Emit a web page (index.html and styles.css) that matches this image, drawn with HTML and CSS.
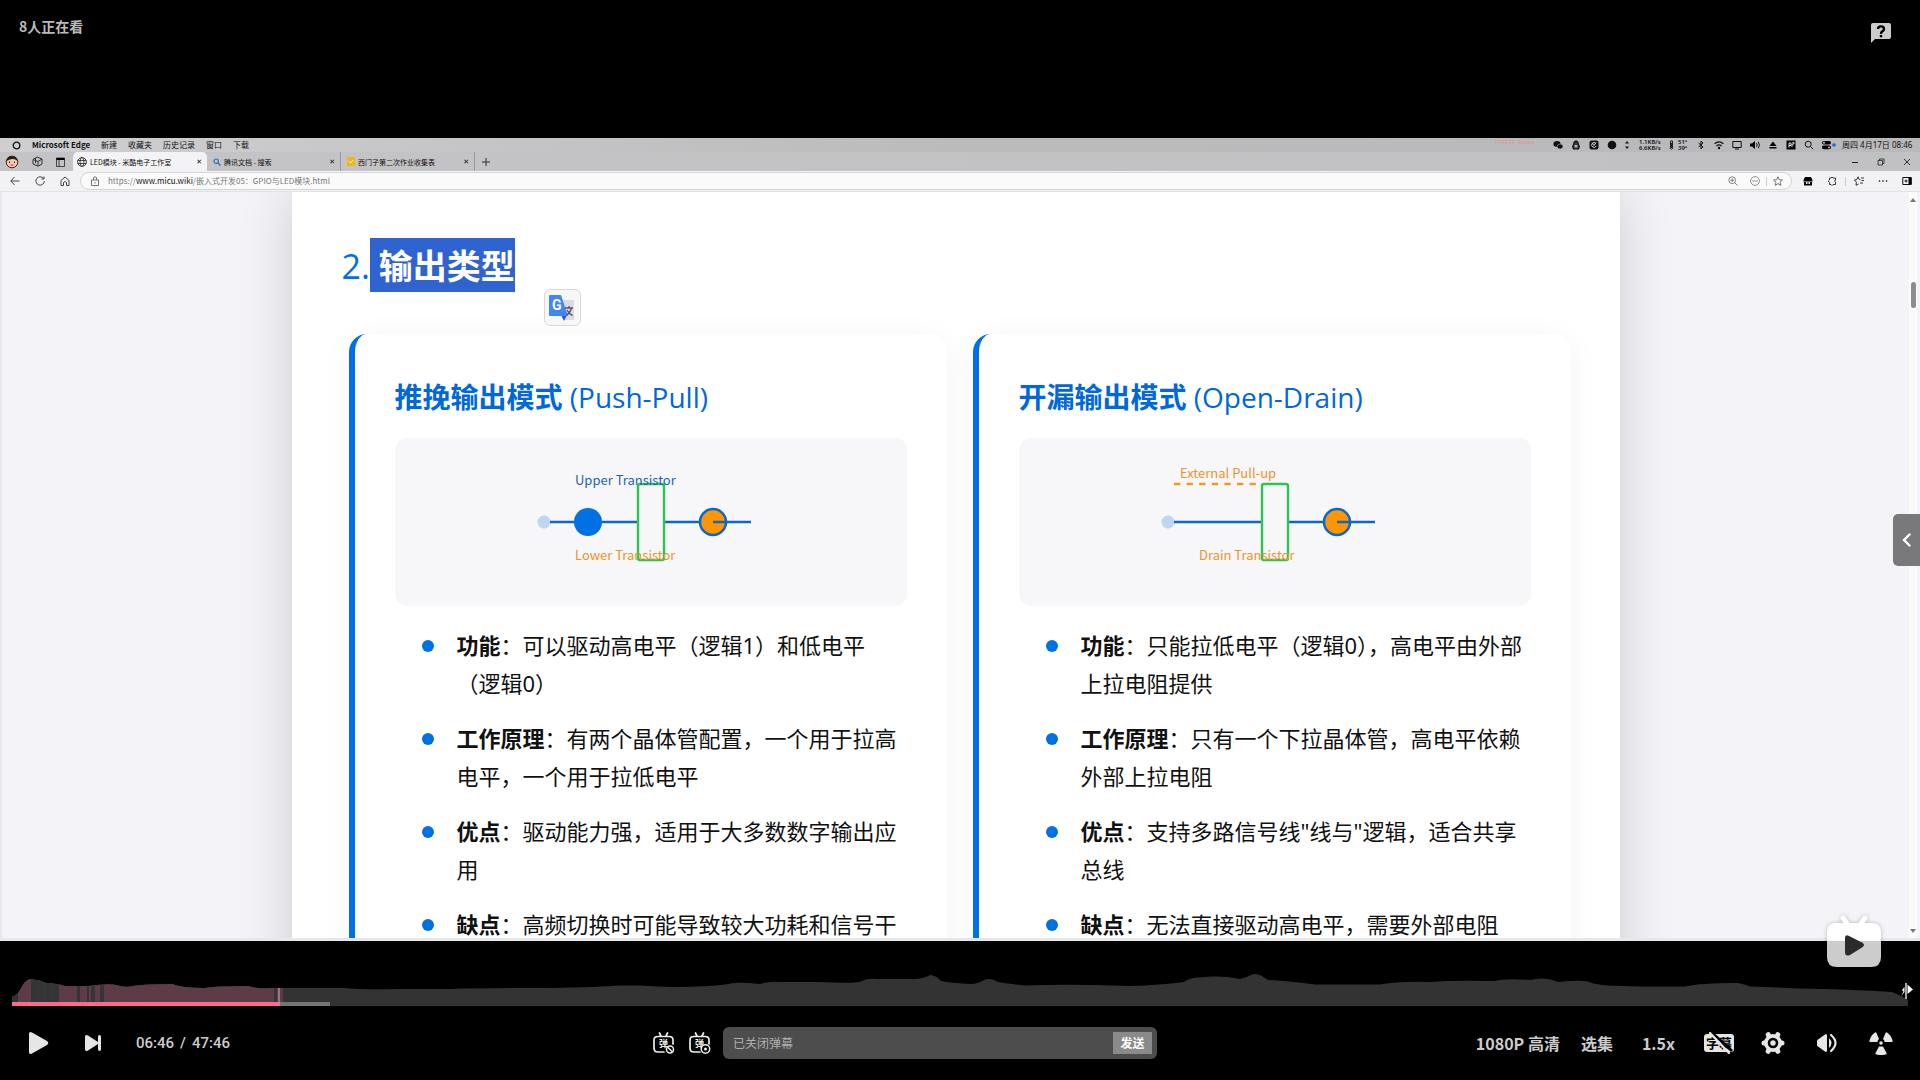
FILE: index.html
```html
<!DOCTYPE html>
<html lang="zh-CN">
<head>
<meta charset="utf-8">
<title>LED模块 - 米酷电子工作室</title>
<link rel="stylesheet" href="styles.css">
</head>
<body>
<main class="player">
  <header class="player-top">
    <span class="viewers">8人正在看</span>
    <button class="icon-btn" aria-label="帮助">
      <svg width="22" height="22" viewBox="0 0 22 22"><path fill="#ccc" d="M3 1H19Q21 1 21 3V15Q21 17 19 17H5L1 21V3Q1 1 3 1Z"/><path fill="none" stroke="#000" stroke-width="2.4" d="M8 7Q8 4.400 11 4.400Q14 4.400 14 7Q14 8.600 12.300 9.400Q11 10 11 12M11 13V15.200"/></svg>
    </button>
  </header>

  <section class="video">
    <div class="menubar">
      <svg class="ring" width="9" height="9" viewBox="0 0 9 9"><circle cx="4.500" cy="4.500" r="3.300" fill="none" stroke="#111" stroke-width="1.300"/></svg>
      <b class="app-name">Microsoft Edge</b>
      <nav class="menus"><span>新建</span><span>收藏夹</span><span>历史记录</span><span>窗口</span><span>下载</span></nav>
      <span class="rec-note">17:02:53 - Secure</span>
      <div class="tray">
        <svg viewBox="0 0 10 10"><ellipse cx="4" cy="4" rx="3.600" ry="3" fill="#111"/><ellipse cx="7" cy="6.500" rx="2.900" ry="2.400" fill="#111" stroke="#bbb" stroke-width=".5"/></svg>
        <svg viewBox="0 0 10 10"><path fill="#333" stroke="#111" d="M5 .8Q7.400.8 7.400 4L8.700 7 7.500 6.800 8 9H2L2.500 6.800 1.300 7 2.600 4Q2.600.8 5 .8Z"/><path fill="#bbb" d="M3.600 5H6.400V7.500H3.600Z"/></svg>
        <svg viewBox="0 0 10 10"><rect x=".5" y=".5" width="9" height="9" rx="2" fill="#111"/><path fill="none" stroke="#ccc" d="M7 3.500A2.400 2.400 0 1 0 7.300 6M3 2.500 5 5.500 7 2.500"/></svg>
        <svg viewBox="0 0 10 10"><circle cx="5" cy="5" r="4.300" fill="#111"/></svg>
        <svg class="narrow" viewBox="0 0 4 10"><path fill="#111" d="M0 3.500 2 1 4 3.500ZM0 6.500H4L2 9Z"/></svg>
        <span class="net">1.1KB/s<br>6.6KB/s</span>
        <svg class="thermo" viewBox="0 0 5 10"><path fill="none" stroke="#222" d="M1.500 1H3.500V6Q4.500 9.300 2.500 9.300T1.500 6ZM2.500 3V8"/></svg>
        <span class="temp">51°<br>39°</span>
        <svg viewBox="0 0 10 10"><path fill="none" stroke="#111" d="M2.500 3 7 7 5 9V1L7 3 2.500 7"/></svg>
        <svg viewBox="0 0 10 10"><path fill="none" stroke="#111" stroke-width="1.300" d="M.6 3.800Q5 0 9.400 3.800M2.400 6Q5 3.800 7.600 6"/><circle cx="5" cy="8" r="1.200"/></svg>
        <svg viewBox="0 0 10 10"><path fill="none" stroke="#111" d="M.8 1.500H9.200V7.500H.8ZM3 9H7"/></svg>
        <svg viewBox="0 0 10 10"><path d="M0 3.500H2L5 1V9L2 6.500H0Z"/><path fill="none" stroke="#111" d="M6.500 3.200Q7.800 5 6.500 6.800M8.300 1.800Q10.500 5 8.300 8.200"/></svg>
        <svg viewBox="0 0 10 10"><path d="M1.500 6 5 1.500 8.500 6ZM1.500 7H8.500V8.500H1.500Z"/></svg>
        <svg viewBox="0 0 10 10"><rect x=".5" y=".5" width="9" height="9"/><path fill="none" stroke="#ddd" d="M3 7.500V3H5V5.500H3M6 7V4H8V2.500H6.500"/></svg>
        <svg viewBox="0 0 10 10"><circle cx="4.200" cy="4.200" r="3" fill="none" stroke="#111"/><path stroke="#111" d="M6.500 6.500 9.300 9.300"/></svg>
        <svg class="toggles" viewBox="0 0 14 10"><rect x="0" y="1" width="9" height="3.600" rx="1.800"/><rect x="0" y="5.600" width="9" height="3.600" rx="1.800"/><circle cx="2" cy="2.800" r="1" fill="#bbb"/><circle cx="7" cy="7.400" r="1" fill="#bbb"/><circle cx="12" cy="5" r="1.800" fill="#1565e8"/></svg>
      </div>
      <time class="clock">周四 4月17日 08:46</time>
    </div>

    <div class="tabstrip">
      <div class="strip-tools">
        <svg width="14" height="14" viewBox="0 0 14 14"><circle cx="7" cy="7" r="5.800" fill="#f4c8a8" stroke="#3a2a22"/><path fill="#222" d="M1.500 6Q2 1 7 1T12.500 6Q10 3.500 7 4T1.500 6Z"/><path stroke="#222" d="M4.500 6.500V8M9.500 6.500V8"/><path stroke="#c33" d="M5.500 10H8.500"/></svg>
        <svg width="11" height="11" viewBox="0 0 11 11"><path fill="none" stroke="#333" d="M1 3.500 5 1 10 3V8L6 10.200 1 8ZM1 3.500 6 5.500V10M6 5.500 10 3M3.500 2V7"/></svg>
        <svg width="9" height="10" viewBox="0 0 9 10"><path fill="none" stroke="#222" stroke-width=".8" d="M.5 1H8.500V9.500H.5ZM3 3V9.500"/><path d="M.5 1H8.500V3H.5Z"/></svg>
      </div>
      <div class="tab active">
        <svg width="10" height="10" viewBox="0 0 10 10"><g fill="none" stroke="#222" stroke-width=".8"><circle cx="5" cy="5" r="4.400"/><ellipse cx="5" cy="5" rx="2" ry="4.400"/><path d="M.6 3.500H9.400M.6 6.500H9.400"/></g></svg>
        <span>LED模块 - 米酷电子工作室</span><button aria-label="关闭">✕</button>
      </div>
      <div class="tab">
        <svg width="8" height="8" viewBox="0 0 8 8"><circle cx="3.200" cy="3.200" r="2.200" fill="none" stroke="#2a74b8" stroke-width="1.200"/><path stroke="#2a74b8" stroke-width="1.400" d="M5 5 7.500 7.500"/></svg>
        <span>腾讯文档 - 搜索</span><button aria-label="关闭">✕</button>
      </div>
      <div class="tab">
        <svg width="8" height="9" viewBox="0 0 8 9"><rect width="8" height="9" rx="1" fill="#f7b512"/><path fill="none" stroke="#fff" d="M2 4.500 3.500 6 6 3"/></svg>
        <span>西门子第二次作业收集表</span><button aria-label="关闭">✕</button>
      </div>
      <button class="new-tab" aria-label="新标签页"><svg width="8" height="8" viewBox="0 0 8 8"><path stroke="#333" d="M4 0V8M0 4H8"/></svg></button>
      <div class="win">
        <svg viewBox="0 0 8 8"><path stroke="#222" d="M1 4.500H7"/></svg>
        <svg viewBox="0 0 8 8"><path fill="none" stroke="#222" stroke-width=".8" d="M1 2.500H5.500V7H1ZM2.500 2.500V1H7V5.500H5.500"/></svg>
        <svg viewBox="0 0 8 8"><path stroke="#222" stroke-width=".9" d="M1 1 7 7M7 1 1 7"/></svg>
      </div>
    </div>

    <div class="toolbar">
      <div class="nav-tools">
        <svg viewBox="0 0 10 10"><path fill="none" stroke="#333" stroke-width=".9" d="M9.500 5H.8M4.500 1 .8 5 4.500 9"/></svg>
        <svg viewBox="0 0 10 10"><path fill="none" stroke="#333" stroke-width=".9" d="M8.500 2.500A4.200 4.200 0 1 0 9.300 5M9 .5V3H6.500"/></svg>
        <svg viewBox="0 0 10 10"><path fill="none" stroke="#333" stroke-width=".9" d="M1 4.500 5 1 9 4.500V9.500H6.500V6.500Q5 4.500 3.500 6.500V9.500H1Z"/></svg>
      </div>
      <div class="address">
        <svg viewBox="0 0 10 10"><path fill="none" stroke="#555" stroke-width=".8" d="M1.500 4H8.500V9.500H1.500ZM3.500 4V1.500Q5 0 6.500 1.500V4M5 6V7.500"/></svg>
        <span class="url">https://<em>www.micu.wiki</em>/嵌入式开发05：GPIO与LED模块.html</span>
        <div class="addr-tools">
          <svg viewBox="0 0 10 10"><g fill="none" stroke="#666" stroke-width=".8"><circle cx="4.200" cy="4.200" r="3.400"/><path d="M6.700 6.700 9.500 9.500M2.500 4.200H6M4.200 2.500V6"/></g></svg>
          <svg viewBox="0 0 10 10"><circle cx="5" cy="5" r="4.400" fill="none" stroke="#666" stroke-width=".7"/><path stroke="#444" stroke-dasharray="1 1" d="M2.500 5H8"/></svg>
          <i class="rule"></i>
          <svg viewBox="0 0 10 10"><path fill="none" stroke="#555" stroke-width=".8" d="M5 .8 6.300 3.700 9.500 4 7 6.200 7.800 9.300 5 7.600 2.200 9.300 3 6.200.5 4 3.700 3.700Z"/></svg>
        </div>
      </div>
      <div class="ext-tools">
        <svg viewBox="0 0 10 10"><path d="M2 1H8L9.500 4V5.500H.5V4ZM1 6H9V9.500H1Z"/><path fill="#eee" d="M3 6H4.500V8H3ZM5.500 6H7V8H5.500Z"/></svg>
        <svg viewBox="0 0 10 10"><path fill="none" stroke="#222" stroke-width=".9" d="M2.500 2H4Q5 0 6 2H8.500V4Q6.500 5 8.500 6.200V8.500H6Q5 10.500 4 8.500H2.500V6.500Q0 5 2.500 4Z"/></svg>
        <i class="rule"></i>
        <svg viewBox="0 0 10 10"><path fill="none" stroke="#222" stroke-width=".9" d="M6.500 3.700 5.300 3.500 4 .8 2.900 3.500.4 4 2.400 6.200 2 9.300 4.500 8M7 2H10M7.500 4.500H10M6 7H9"/></svg>
        <svg viewBox="0 0 10 10"><circle cx="1.500" cy="5" r=".8"/><circle cx="5" cy="5" r=".8"/><circle cx="8.500" cy="5" r=".8"/></svg>
        <svg viewBox="0 0 10 10"><path fill="none" stroke="#111" d="M.8 1.500H9.200V8.500H.8ZM2.500 5H5.500M4 3.500V6.500"/><path d="M6.500 1.500H9.500V8.500H6.500Z"/></svg>
      </div>
    </div>

    <div class="viewport">
      <article class="sheet">
        <h1 class="title"><span>2.</span><mark>&nbsp;输出类型</mark>
          <button class="translate" aria-label="翻译">
            <svg width="30" height="30" viewBox="0 0 30 30"><path fill="#dcdcde" d="M11 7H26V27H17Z"/><path fill="#3a52b8" d="M13 22H19L16 28Z"/><path fill="#4285f4" d="M2 2H13L20 23H2Q1 23 1 22V3Q1 2 2 2Z"/><text x="4" y="17" class="glyph-g">G</text><path fill="none" stroke="#556" stroke-width="1.400" d="M17 15H25M21 13V15M23.500 15Q22 20 18.500 22M19 17Q21 21 24.500 22.500"/></svg>
          </button>
        </h1>
        <div class="cards">
          <section class="card">
            <h2>推挽输出模式 <span>(Push-Pull)</span></h2>
            <div class="diagram">
              <svg viewBox="0 0 512 168">
                <circle cx="149" cy="84" r="6.500" fill="#bdd7f3"/>
                <g fill="none" stroke="#0b67c9" stroke-width="2.500"><path d="M155 84H243M269 84H318"/></g>
                <circle cx="193" cy="84" r="14" fill="#0071e3"/>
                <rect x="243" y="46" width="26" height="76" rx="2" fill="none" stroke="#2dc44f" stroke-width="2.400"/>
                <circle cx="318" cy="84" r="13" fill="#ff9500" stroke="#0b67c9" stroke-width="2.500"/>
                <path stroke="#0b67c9" stroke-width="2.500" d="M318 84H356"/>
                <text x="180" y="47" class="lbl blue">Upper Transistor</text>
                <text x="180" y="122" class="lbl">Lower Transistor</text>
              </svg>
            </div>
            <ul>
              <li><p><b>功能</b>：可以驱动高电平（逻辑1）和低电平<br>（逻辑0）</p></li>
              <li><p><b>工作原理</b>：有两个晶体管配置，一个用于拉高电平，一个用于拉低电平</p></li>
              <li><p><b>优点</b>：驱动能力强，适用于大多数数字输出应用</p></li>
              <li><p><b>缺点</b>：高频切换时可能导致较大功耗和信号干扰</p></li>
            </ul>
          </section>
          <section class="card">
            <h2>开漏输出模式 <span>(Open-Drain)</span></h2>
            <div class="diagram">
              <svg viewBox="0 0 512 168">
                <circle cx="149" cy="84" r="6.500" fill="#bdd7f3"/>
                <path stroke="#ee9a1c" stroke-width="2.500" stroke-dasharray="6.300 6.300" d="M155 46H240"/>
                <path stroke="#0b67c9" stroke-width="2.500" d="M155 84H243M269 84H318"/>
                <rect x="243" y="46" width="26" height="76" rx="2" fill="none" stroke="#2dc44f" stroke-width="2.400"/>
                <circle cx="318" cy="84" r="13" fill="#ff9500" stroke="#0b67c9" stroke-width="2.500"/>
                <path stroke="#0b67c9" stroke-width="2.500" d="M318 84H356"/>
                <text x="161" y="40" class="lbl">External Pull-up</text>
                <text x="180" y="122" class="lbl">Drain Transistor</text>
              </svg>
            </div>
            <ul>
              <li><p><b>功能</b>：只能拉低电平（逻辑0），高电平由外部上拉电阻提供</p></li>
              <li><p><b>工作原理</b>：只有一个下拉晶体管，高电平依赖外部上拉电阻</p></li>
              <li><p><b>优点</b>：支持多路信号线"线与"逻辑，适合共享总线</p></li>
              <li><p><b>缺点</b>：无法直接驱动高电平，需要外部电阻</p></li>
            </ul>
          </section>
        </div>
      </article>
      <div class="scrollbar">
        <svg width="6" height="4" viewBox="0 0 6 4"><path fill="#777" d="M0 4 3 0 6 4Z"/></svg>
        <i class="thumb"></i>
        <svg width="6" height="4" viewBox="0 0 6 4"><path fill="#777" d="M0 0H6L3 4Z"/></svg>
      </div>
    </div>
  </section>

  <button class="side-toggle" aria-label="展开侧栏"><svg width="10" height="14" viewBox="0 0 10 14"><path fill="none" stroke="#fff" stroke-width="2.400" stroke-linecap="round" d="M7.500 1.500 2 7 7.500 12.500"/></svg></button>

  <svg class="tv" width="56" height="54" viewBox="0 0 56 54"><path stroke="#fff" stroke-width="5" stroke-linecap="round" d="M17 4 22 11M39 4 34 11"/><path fill="#fff" d="M10 9H46Q55 9 55 18V27H1V18Q1 9 10 9Z"/><path fill="#ccc" d="M1 27H55V43Q55 53 45 53H11Q1 53 1 43Z"/><path fill="#2b2b2b" d="M19 24Q19 20 23 22L36 28.500Q40 31 36 33.500L24 41Q19 43 19 38Z"/></svg>

  <footer class="player-bottom">
    <div class="progress">
      <svg class="wave" viewBox="12 970 1896 36" preserveAspectRatio="none">
        <defs><clipPath id="heat"><path d="M12 1006V996Q16 996 20 990Q25 979 31 979Q40 980 46 983Q60 984 65 986H88Q110 983 116 985Q125 988 133 986Q145 984 172 984Q182 988 205 988Q215 986 248 986Q256 989 270 988H345Q360 990 400 989H450Q485 988 550 988Q600 987 620 985.500H640Q670 988 708 986Q725 985 733 983Q742 982 760 984Q770 981 780 982H820Q858 984 862 981Q868 978 876 979H914Q926 978 930 975Q936 975 941 981Q950 983 972 984Q980 983 984 980Q990 977 998 982Q1010 984 1025 985.500Q1065 984 1130 986Q1160 985 1184 982Q1190 977 1200 977.500Q1220 975 1240 979Q1246 978 1252 974.500Q1258 972 1268 980Q1290 981 1315 984.500H1380Q1400 981 1430 982Q1450 980 1495 981Q1505 978 1530 980Q1545 976 1558 982Q1585 979 1592 983Q1600 986 1640 986.500H1685Q1700 983 1738 983Q1745 984 1750 986.500Q1770 987 1800 988.500Q1850 989 1892 992Q1900 995 1908 1000V1006Z"/></clipPath></defs>
        <g clip-path="url(#heat)">
          <rect x="12" y="970" width="1896" height="36" fill="#333"/>
          <rect x="18" y="970" width="265" height="36" fill="#5e3c46"/>
          <path fill="#353535" d="M31 970H59V1006H31ZM77 970H80V1006H77ZM87 970H89V1006H87ZM91 970H95V1006H91ZM100 970H104V1006H100ZM274 970H277V1006H274Z"/>
          <path stroke="#3d383a" d="M38 970V1006M45 970V1006M52 970V1006"/>
          <rect x="278" y="970" width="2" height="36" fill="#957681"/>
        </g>
      </svg>
      <div class="bar"><i class="played"></i><i class="buffered"></i></div>
      <svg class="seek" width="12" height="18" viewBox="0 0 12 18"><path stroke="#fff" stroke-width="1.300" d="M5 1V17"/><path fill="#fff" d="M6.500 2.500 12 7.500 6.500 12ZM3.500 5V10L0 14 2.500 9.500 1 8Z"/></svg>
    </div>
    <div class="controls">
      <div class="left">
        <button class="icon-btn" aria-label="播放"><svg width="20" height="24" viewBox="0 0 20 24"><path fill="#e6e6e6" d="M0 3Q0 0 3 1.500L18 10Q20.500 12 18 14L3 22.500Q0 24 0 21Z"/></svg></button>
        <button class="icon-btn" aria-label="下一个"><svg width="16" height="18" viewBox="0 0 16 18"><path fill="#e6e6e6" d="M0 3Q0 0 3 1.500L13 8V3Q13 1 14.500 1T16 3V15Q16 17 14.500 17T13 15V10L3 16.500Q0 18 0 15Z"/></svg></button>
        <div class="time"><span>06:46</span><span>/</span><span>47:46</span></div>
      </div>
      <form class="danmaku">
        <button type="button" class="icon-btn" aria-label="弹幕开关"><svg width="22" height="22" viewBox="0 0 22 22"><path fill="none" stroke="#eee" stroke-width="1.700" stroke-linecap="round" d="M6.500 1 8 4M14.500 1 13 4M11 20H5Q1 20 1 16V8Q1 4.500 5 4.500H16Q20 4.500 20 8V12"/><text x="6" y="15" class="glyph-dan">弹</text><circle cx="17" cy="17.500" r="3.500" fill="#000" stroke="#eee" stroke-width="1.500"/><path stroke="#eee" stroke-width="1.500" d="M14.500 15 19.500 20"/></svg></button>
        <button type="button" class="icon-btn" aria-label="弹幕设置"><svg width="22" height="22" viewBox="0 0 22 22"><path fill="none" stroke="#eee" stroke-width="1.700" stroke-linecap="round" d="M6.500 1 8 4M14.500 1 13 4M11 20H5Q1 20 1 16V8Q1 4.500 5 4.500H16Q20 4.500 20 8V12"/><text x="6" y="15" class="glyph-dan">弹</text><circle cx="16.500" cy="17" r="4.200" fill="#000" stroke="#eee" stroke-width="1.500"/><circle cx="16.500" cy="17" r="1.500" fill="#eee"/></svg></button>
        <div class="send-box"><input type="text" placeholder="已关闭弹幕" aria-label="弹幕"><button type="button" class="send">发送</button></div>
      </form>
      <div class="right">
        <button class="txt">1080P 高清</button>
        <button class="txt">选集</button>
        <button class="txt speed">1.5x</button>
        <button class="icon-btn cc" aria-label="字幕"><svg width="32" height="22" viewBox="0 0 32 22"><rect x="1" y="2" width="30" height="18" rx="3" fill="#e6e6e6"/><text x="3" y="16" class="glyph-cc">字幕</text><path stroke="#000" stroke-width="3" d="M8 0 29 19"/><path stroke="#e6e6e6" stroke-width="2.200" stroke-linecap="round" d="M7 1 26 21"/></svg></button>
        <button class="icon-btn gear" aria-label="设置"><svg width="24" height="24" viewBox="0 0 24 24"><circle cx="12" cy="12" r="9" fill="#e6e6e6"/><path stroke="#e6e6e6" stroke-width="5" stroke-linecap="round" d="M3 12H21M7.200 3.700 16.800 20.300M16.800 3.700 7.200 20.300"/><circle cx="12" cy="12" r="4" fill="none" stroke="#000" stroke-width="2.600"/></svg></button>
        <button class="icon-btn volume" aria-label="音量"><svg width="22" height="22" viewBox="0 0 22 22"><path fill="#e6e6e6" d="M1 9Q1 8 2 7.500L9 2.500Q11 1 11 4V18Q11 21 9 19.500L2 14.500Q1 14 1 13ZM13 6Q18 11 13 16Z"/><path fill="none" stroke="#e6e6e6" stroke-width="2.200" stroke-linecap="round" d="M15 3Q24 11 15 19"/></svg></button>
        <button class="icon-btn nuke" aria-label="更多"><svg width="24" height="24" viewBox="0 0 24 24"><circle cx="12" cy="12" r="1.800" fill="#e6e6e6"/><path fill="#e6e6e6" d="M8.500 11H1Q0 11 .5 9.500Q2 4 6 1.500Q7 1 7.500 2L10 8Q8.500 9 8.500 11ZM15.500 11H23Q24 11 23.500 9.500Q22 4 18 1.500Q17 1 16.500 2L14 8Q15.500 9 15.500 11ZM10 15.500H14L17.500 22Q18 23 17 23.300Q12 25 7 23.300Q6 23 6.500 22Z"/></svg></button>
      </div>
    </div>
  </footer>
</main>
</body>
</html>
```
FILE: styles.css
```css
* { box-sizing: border-box; }
body { margin: 0; background: #000; font-family: "Noto Sans", "Noto Sans CJK SC", sans-serif; }
button { margin: 0; padding: 0; border: 0; background: none; font: inherit; color: inherit; }
svg { display: block; flex: none; }
h1, h2, p, ul { margin: 0; padding: 0; }

.player { position: relative; display: flex; flex-direction: column; height: 100vh; overflow: hidden; }
.player-top { flex: 0 0 138px; display: flex; justify-content: space-between; align-items: flex-start; padding: 16px 28px 0 19px; }
.viewers { font: 700 14px/20px "Noto Sans CJK SC", sans-serif; color: #bbb; }
.player-top .icon-btn { padding-top: 6px; }

/* recorded browser window */
.video { flex: 1 1 0; min-height: 0; display: flex; flex-direction: column; padding-bottom: 3px; background: #e8e8ea; color: #111; }
.menubar { font: 8px/14px "Noto Sans CJK SC", sans-serif; }
.tabstrip { font: 7px/14px "Noto Sans CJK SC", sans-serif; }
.menubar { flex: 0 0 14px; display: flex; align-items: center; padding: 0 12px; background: linear-gradient(90deg, #cfced0, #bcbbbc 50%, #b9b8ba); }
.app-name { margin-left: 11px; width: 69px; white-space: nowrap; }
.menus { display: flex; gap: 11px; }
.rec-note { margin-left: auto; margin-right: 19px; font-size: 5px; line-height: 8px; align-self: flex-start; color: #e88; }
.tray { display: flex; align-items: center; gap: 8px; }
.tray svg { width: 10px; height: 10px; }
.tray .narrow { width: 4px; }
.net, .temp { font: 600 6px/6px "Noto Sans", sans-serif; }
.net { width: 22px; margin-left: 2px; }
.tray .thermo { width: 5px; }
.temp { margin-left: -4px; width: 10px; }
.tray .toggles { width: 14px; }
.clock { margin-left: 6px; width: 66px; font-family: "Noto Sans", "Noto Sans CJK SC", sans-serif; white-space: nowrap; }

.tabstrip { flex: 0 0 19px; display: flex; align-items: stretch; background: linear-gradient(90deg, #c4c3c5, #c1c0c2); }
.strip-tools { width: 73px; display: flex; align-items: center; gap: 13px; padding-left: 5px; }
.tab { width: 134px; display: flex; align-items: center; gap: 3px; padding: 0 5px 0 6px; border-right: 1px solid #999; white-space: nowrap; }
.tab.active { border: 0; border-radius: 5px 5px 0 0; background: #f3f3f5; padding-left: 4px; }
.tab button { margin-left: auto; font-family: "DejaVu Sans", sans-serif; }
.new-tab { margin-left: 7px; }
.win { margin-left: auto; display: flex; align-items: center; gap: 18px; padding-right: 9px; }
.win svg { width: 8px; height: 8px; }

.toolbar { flex: 0 0 21px; display: flex; align-items: center; background: #f2f2f4; padding: 0 8px 0 10px; border-bottom: 1px solid #e2e2e4; }
.toolbar svg { width: 10px; height: 10px; }
.nav-tools { display: flex; gap: 15px; width: 70px; }
.address { flex: 1; display: flex; align-items: center; height: 18px; border: 1px solid #d4d4d6; border-radius: 9px; background: #fafafb; padding: 0 8px; }
.address > svg { margin-left: 1px; }
.url { margin-left: 8px; font: 8px/14px "Noto Sans CJK SC", sans-serif; color: #777; }
.url em { font-style: normal; color: #111; }
.addr-tools { margin-left: auto; display: flex; align-items: center; gap: 6px; }
.addr-tools svg:first-child { margin-right: 6px; }
.rule { width: 1px; height: 9px; background: #ccc; }
.ext-tools { display: flex; align-items: center; gap: 8px; margin-left: 11px; }
.ext-tools svg { margin-right: 6px; }
.ext-tools svg:nth-child(2), .ext-tools svg:last-child { margin-right: 0; }

.viewport { flex: 1 1 0; min-height: 0; display: flex; margin: 0 0 0 2px; overflow: hidden; background: #f4f3f8; }
.sheet { flex: 0 1 1328px; margin: 0 auto; padding: 46px 49px 0 50px; background: #fff; box-shadow: 0 0 50px rgba(0, 0, 0, .16); align-self: flex-start; }
.title { position: relative; display: flex; align-items: flex-start; height: 96px; font: 700 34px/56px "Open Sans", "Noto Sans CJK SC", sans-serif; color: #0071e3; }
.title span { font-weight: 500; }
.title mark { height: 54px; background: #2f64d0; color: #fff; }
.translate { position: absolute; left: 202px; top: 51px; width: 37px; height: 37px; padding: 3px; border: 1px solid #d8d8da; border-radius: 6px; background: #f7f7f8; }
.glyph-g { font: 700 14px Roboto, sans-serif; fill: #fff; }
.cards { display: grid; grid-template-columns: 1fr 1fr; gap: 26px; margin-left: 7px; }
.card { border-left: 6px solid #0071e3; border-radius: 18px; padding: 40px; background: #fff; box-shadow: 0 4px 30px rgba(0, 0, 0, .05); }
.card h2 { font: 700 28px/46px "Open Sans", "Noto Sans CJK SC", sans-serif; color: #0068d9; white-space: nowrap; }
.card h2 span { font-weight: 500; }
.diagram { margin: 18px 0 20px; border-radius: 12px; background: #f7f6f9; }
.diagram svg { width: 100%; height: 168px; }
.lbl { font: 13px "Noto Sans CJK SC", sans-serif; fill: #ea952c; }
.lbl.blue { fill: #1f63b5; }
.card ul { list-style: none; padding-left: 27px; display: grid; gap: 17px; }
.card li { display: flex; gap: 23px; }
.card li::before { content: ""; flex: none; width: 12px; height: 12px; margin-top: 14px; border-radius: 50%; background: #0071e3; }
.card p { font-size: 22px; line-height: 38px; color: #111; }
.scrollbar { flex: 0 0 8px; display: flex; flex-direction: column; align-items: center; padding: 6px 0 5px; margin-right: 3px; background: #fafafb; }
.thumb { width: 5px; height: 26px; margin: 80px 0 auto; border-radius: 3px; background: #8c8c8e; }

/* overlays on the video */
.side-toggle { position: absolute; right: 0; top: 50%; margin-top: -26px; width: 27px; height: 52px; display: flex; align-items: center; justify-content: center; border-radius: 5px 0 0 5px; background: #79797b; }
.tv { position: absolute; right: 38px; bottom: 112px; filter: drop-shadow(0 0 2px rgba(0, 0, 0, .25)); }

.player-bottom { flex: 0 0 139px; padding: 29px 12px 0; color: #ccc; }
.progress { position: relative; }
.wave { width: 100%; height: 36px; }
.bar { display: flex; height: 4px; margin-top: -4px; position: relative; }
.played { flex: 0 0 14.15%; background: #f69; }
.buffered { flex: 0 0 2.6%; background: #757575; }
.seek { position: absolute; right: -5px; top: 12px; }
.controls { display: flex; align-items: center; height: 74px; }
.left { flex: 0 0 641px; display: flex; align-items: center; padding-left: 17px; }
.left .icon-btn + .icon-btn { margin-left: 36px; }
.time { display: flex; gap: 6px; margin-left: 35px; font: 500 15px/20px Roboto, sans-serif; }
.danmaku { display: flex; align-items: center; width: 504px; }
.danmaku .icon-btn { margin-right: 14px; }
.danmaku .icon-btn + .icon-btn { margin-right: 12px; }
.glyph-dan { font: 700 9px "Noto Sans CJK SC", sans-serif; fill: #eee; }
.send-box { flex: 1; display: flex; align-items: center; height: 32px; padding: 0 5px 0 10px; border-radius: 6px; background: #4d4d4d; }
.send-box input { flex: 1; min-width: 0; padding: 0; border: 0; outline: 0; background: none; color: #fff; font: 12px/20px "Noto Sans CJK SC", sans-serif; }
.send-box input::placeholder { color: #b0b0b0; opacity: 1; }
.send { width: 39px; height: 22px; background: #8a8a8a; color: #fff; font: 700 12px/22px "Noto Sans CJK SC", sans-serif; }
.right { margin-left: auto; display: flex; align-items: center; padding-right: 15px; }
.txt { margin-right: 21px; font: 700 16px/24px "Noto Sans CJK SC", sans-serif; white-space: nowrap; }
.speed { margin: 0 28px 0 8px; }
.glyph-cc { font: 700 13px "Noto Sans CJK SC", sans-serif; fill: #000; }
.gear { margin-left: 26px; }
.volume { margin-left: 31px; }
.nuke { margin-left: 31px; }
```
